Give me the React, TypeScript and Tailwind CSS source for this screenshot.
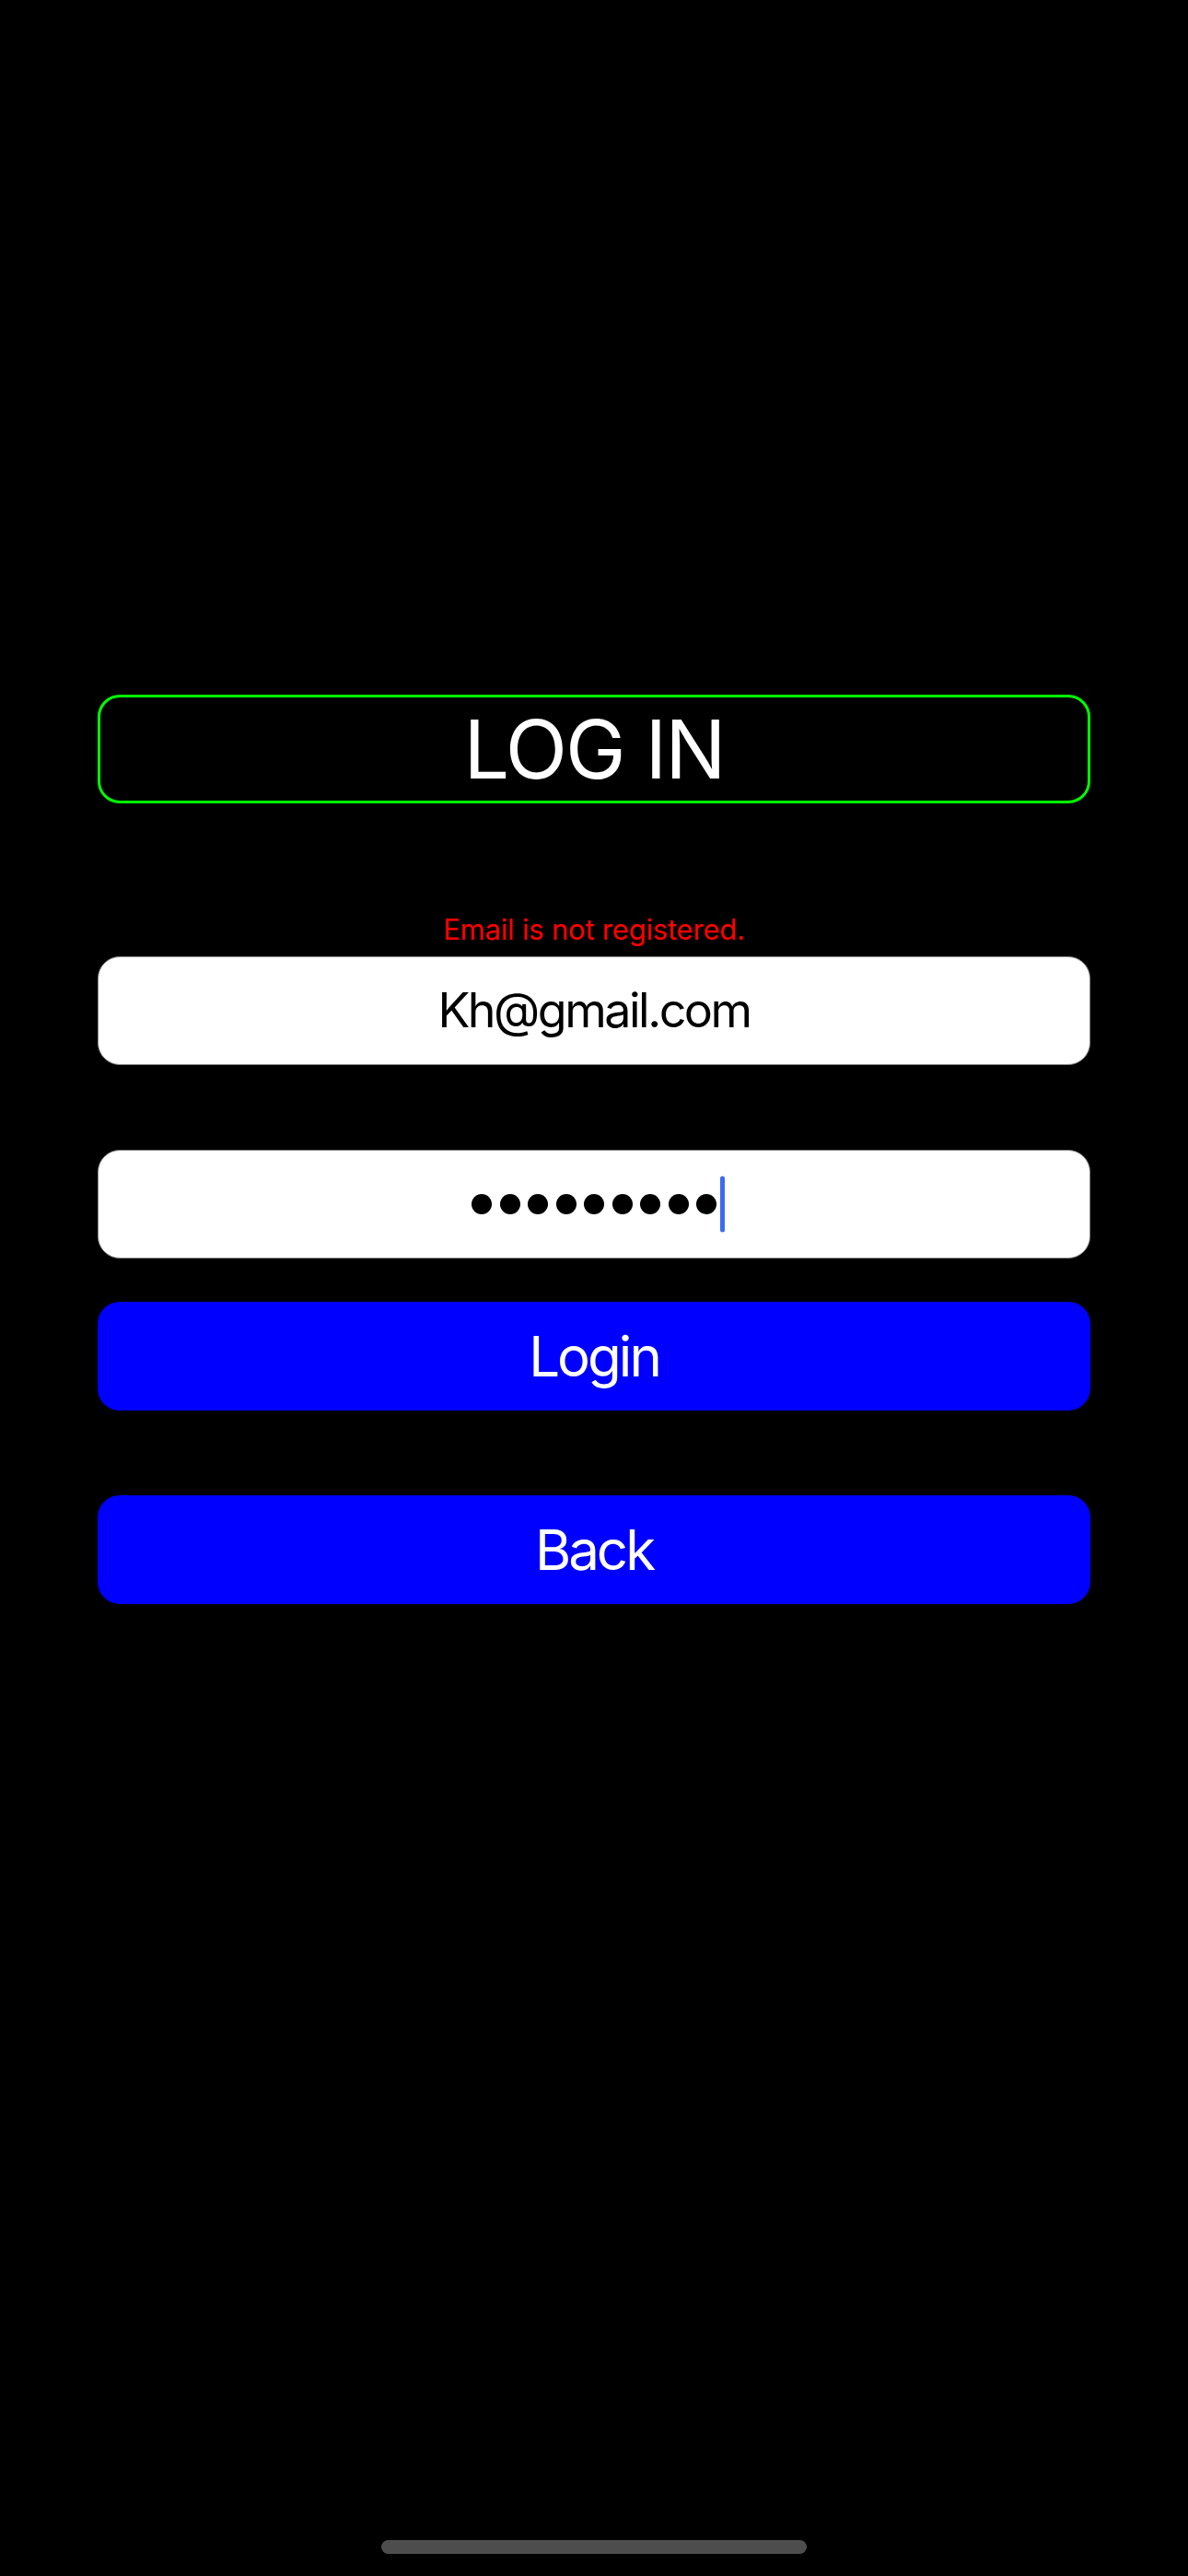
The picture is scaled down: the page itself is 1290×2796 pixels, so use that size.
import React from 'react';

function Field({ children }: { children: React.ReactNode }) {
  return (
    <div className="h-[118px] rounded-[24px] bg-white border border-[#8a8a8a] flex items-center justify-center">
      {children}
    </div>);

}

function BlueButton({ label }: { label: string }) {
  return (
    <button className="h-[118px] w-full rounded-[24px] bg-[#0000ff] text-white text-[60px] leading-none tracking-[-3px] flex items-center justify-center">
      {label}
    </button>);

}

export default function App() {
  return (
    <div className="relative w-[1290px] h-[2796px] bg-black font-['Inter',sans-serif] overflow-hidden">
      <div className="flex flex-col px-[106px] pt-[754px]">
        <div className="h-[118px] rounded-[24px] border-[3px] border-[#00ff00] flex items-center justify-center">
          <span className="text-white text-[88px] leading-none tracking-[-2px]">LOG IN</span>
        </div>

        <p className="mt-[118px] h-[38px] text-center text-[#ff0000] text-[31px] leading-[38px] tracking-[-0.2px]">
          Email is not registered.
        </p>

        <div className="mt-[10px]">
          <Field>
            <span className="text-black text-[52px] leading-none tracking-[-2.5px]">Kh@gmail.com</span>
          </Field>
        </div>

        <div className="mt-[92px]">
          <Field>
            <div className="relative flex gap-[8.5px]">
              {Array.from({ length: 9 }).map((_, i) =>
              <span key={i} className="w-[22px] h-[22px] rounded-full bg-black" />
              )}
              {/* text cursor */}
              <span className="absolute left-[calc(100%+4px)] top-1/2 -translate-y-1/2 w-[5px] h-[61px] rounded-full bg-[#3b6cf0]" />
            </div>
          </Field>
        </div>

        <div className="mt-[47px]">
          <BlueButton label="Login" />
        </div>

        <div className="mt-[92px]">
          <BlueButton label="Back" />
        </div>
      </div>

      <div className="absolute left-[414px] top-[2757px] w-[462px] h-[15px] rounded-full bg-[#4d4d4d]" />
    </div>);

}
